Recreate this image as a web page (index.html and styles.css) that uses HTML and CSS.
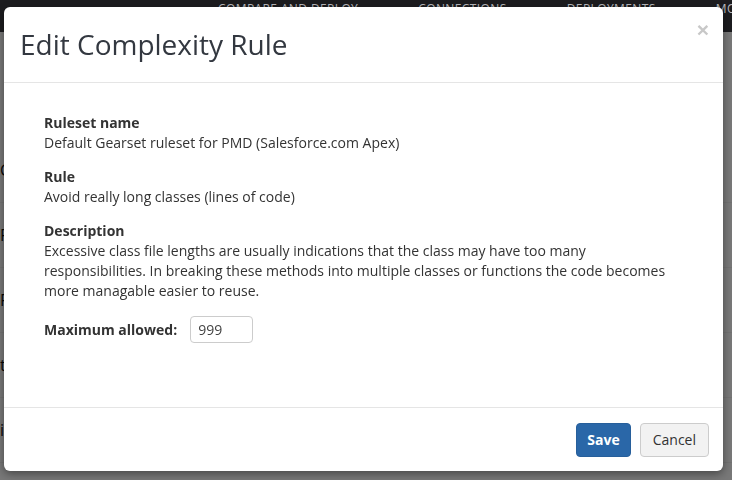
FILE: index.html
```html
<!DOCTYPE html>
<html lang="en">
<head>
    <meta charset="UTF-8">
    <meta name="viewport" content="width=device-width, initial-scale=1.0">
    <title>Edit Complexity Rule</title>
    <link rel="stylesheet" href="styles.css">
</head>
<body>
    <div class="page">
        <nav class="topbar">
            <span class="nav-item">Compare and deploy</span>
            <span class="nav-item">Connections</span>
            <span class="nav-item">Deployments</span>
            <span class="nav-item">Mo</span>
        </nav>
        <ul class="rule-list">
            <li>C</li>
            <li>F</li>
            <li>F</li>
            <li>t</li>
            <li>ic</li>
        </ul>
    </div>

    <div class="backdrop"></div>

    <div class="modal">
        <div class="modal-header">
            <h3>Edit Complexity Rule</h3>
            <button class="close" type="button">&times;</button>
        </div>
        <div class="modal-body">
            <dl class="field">
                <dt>Ruleset name</dt>
                <dd>Default Gearset ruleset for PMD (Salesforce.com Apex)</dd>
            </dl>
            <dl class="field">
                <dt>Rule</dt>
                <dd>Avoid really long classes (lines of code)</dd>
            </dl>
            <dl class="field">
                <dt>Description</dt>
                <dd>Excessive class file lengths are usually indications that the class may have too many responsibilities. In breaking these methods into multiple classes or functions the code becomes more managable easier to reuse.</dd>
            </dl>
            <div class="form-row">
                <label for="maxAllowed">Maximum allowed:</label>
                <input type="text" id="maxAllowed" value="999">
            </div>
        </div>
        <div class="modal-footer">
            <button class="btn btn-primary" type="button">Save</button>
            <button class="btn btn-default" type="button">Cancel</button>
        </div>
    </div>
</body>
</html>
```

FILE: styles.css
```css
body {
    font-family: "Open Sans", "Liberation Sans", sans-serif;
    font-size: 14px;
    line-height: 20px;
    color: #333;
    background-color: #fff;
    margin: 0;
    overflow: hidden;
}
.topbar {
    position: relative;
    z-index: 2;
    height: 32px;
    background-color: #1c1c1f;
    display: flex;
    gap: 60px;
    padding-left: 218px;
    box-sizing: border-box;
    overflow: hidden;
}
.nav-item {
    color: #b9b9bd;
    font-size: 12px;
    line-height: 18px;
    text-transform: uppercase;
    letter-spacing: 0.4px;
    white-space: nowrap;
}
.rule-list {
    list-style: none;
    margin: 0;
    padding: 106px 0 0 0;
}
.rule-list li {
    height: 64px;
    line-height: 64px;
    border-bottom: 1px solid #f2f2f2;
    color: #111;
    font-size: 16px;
}
.backdrop {
    position: fixed;
    top: 0;
    left: 0;
    right: 0;
    bottom: 0;
    z-index: 1;
    background-color: rgba(0, 0, 0, 0.53);
}
.modal {
    position: absolute;
    top: 7px;
    left: 4px;
    z-index: 3;
    width: 719px;
    background-color: #fff;
    border-radius: 6px;
    box-shadow: 0 3px 9px rgba(0, 0, 0, 0.4);
}
.modal-header {
    position: relative;
    padding: 22px 16px;
    border-bottom: 1px solid #e5e5e5;
}
.modal-header h3 {
    margin: 0;
    font-size: 28px;
    line-height: 31px;
    font-weight: 400;
    color: #333840;
}
.close {
    position: absolute;
    top: 12px;
    right: 14px;
    padding: 0;
    border: none;
    background: none;
    font-family: "Liberation Sans", sans-serif;
    font-size: 21px;
    font-weight: bold;
    line-height: 21px;
    color: #c8c8c8;
    cursor: pointer;
}
.modal-body {
    padding: 30px 40px 64px;
}
.field {
    margin: 0 0 14px;
}
.field dt {
    font-weight: bold;
}
.field dd {
    margin: 0;
}
.form-row {
    display: flex;
    align-items: center;
    gap: 13px;
    margin-top: 15px;
}
.form-row label {
    font-weight: bold;
}
.form-row input {
    width: 63px;
    height: 27px;
    padding: 2px 7px;
    border: 1px solid #ccc;
    border-radius: 4px;
    box-sizing: border-box;
    font-family: inherit;
    font-size: 14px;
    color: #444;
}
.modal-footer {
    display: flex;
    justify-content: flex-end;
    gap: 9px;
    padding: 15px 14px 14px;
    border-top: 1px solid #e5e5e5;
}
.btn {
    padding: 6px 12px;
    font-family: inherit;
    font-size: 14px;
    line-height: 20px;
    border-radius: 4px;
    border: 1px solid transparent;
    cursor: pointer;
}
.btn-primary {
    padding: 6px 10px;
    background-color: #2a67a8;
    border-color: #275f9b;
    color: #fff;
    font-weight: bold;
}
.btn-default {
    background-color: #f2f2f2;
    border-color: #ccc;
    color: #333;
}
```
